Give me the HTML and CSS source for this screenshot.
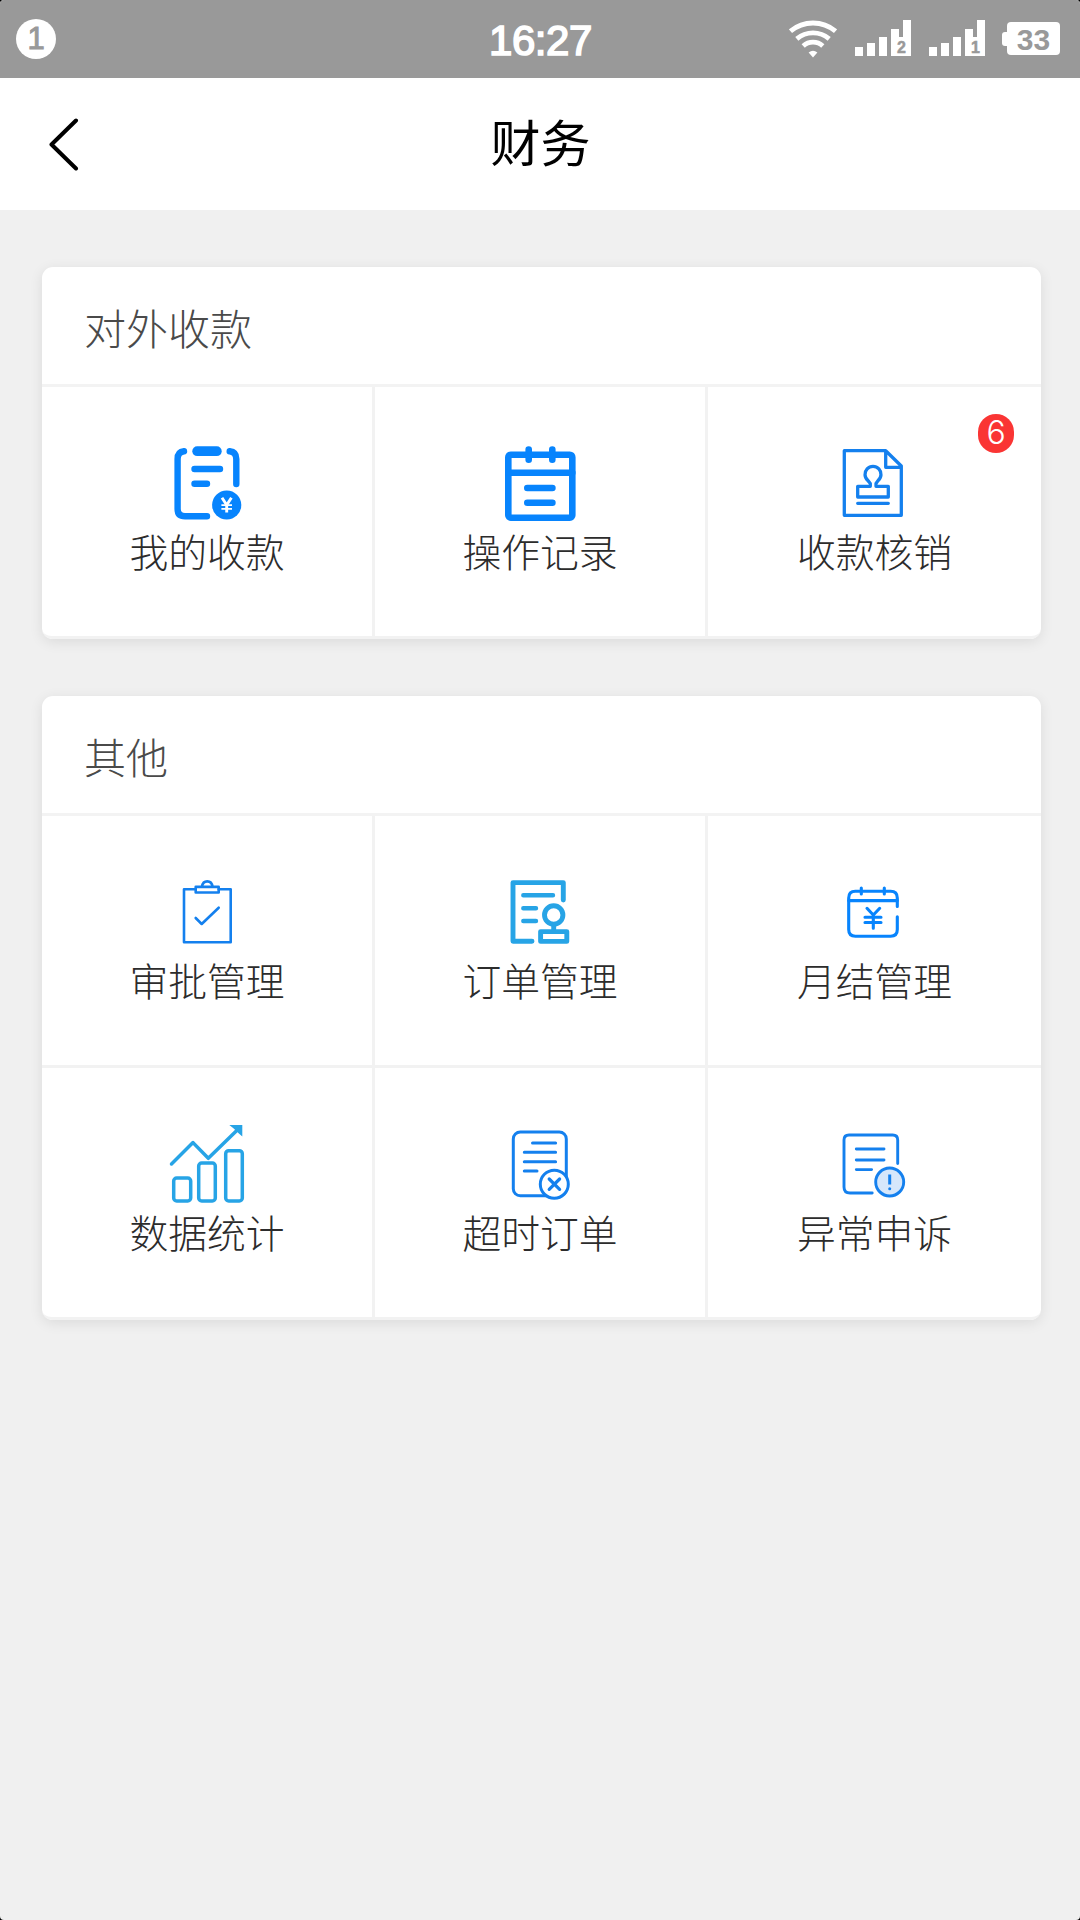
FILE: index.html
```html
<!DOCTYPE html>
<html lang="zh-CN">
<head>
<meta charset="utf-8">
<title>财务</title>
<link rel="stylesheet" href="styles.css">
</head>
<body>
<div class="screen">
  <div class="status">
    <div class="status-left"><span class="notice">1</span></div>
    <div class="clock">16:27</div>
    <div class="status-right">
      <svg class="wifi" viewBox="0 0 48 38" fill="none" stroke="#fff" stroke-width="4.8">
        <path d="M1.5 11.2A35 35 0 0 1 46.5 11.2"/>
        <path d="M7.8 18.8A25 25 0 0 1 40.2 18.8"/>
        <path d="M14.2 26A14.5 14.5 0 0 1 33.8 26"/>
        <path d="M24 37.5L19.6 32.5Q24 29 28.4 32.5Z" fill="#fff" stroke="none"/>
      </svg>
      <svg class="signal" viewBox="0 0 56 36" fill="#fff">
        <path d="M0 27h8v9H0zM12 23h8v13h-8zM24 17h8v19h-8zM36 9h8v8h4V0h8v36H36z"/>
        <text x="46.5" y="33" class="sim">2</text>
      </svg>
      <svg class="signal signal-b" viewBox="0 0 56 36" fill="#fff">
        <path d="M0 27h8v9H0zM12 23h8v13h-8zM24 17h8v19h-8zM36 9h8v8h4V0h8v36H36z"/>
        <text x="46.5" y="33" class="sim">1</text>
      </svg>
      <div class="battery"><span class="nub"></span><span class="level">33</span></div>
    </div>
  </div>

  <header class="nav">
    <svg class="back" viewBox="0 0 32 54" fill="none" stroke="#000" stroke-width="4" stroke-linecap="round" stroke-linejoin="round"><path d="M28 3.5L3.5 27.5L28 51.5"/></svg>
    <h1 class="title">财务</h1>
  </header>

  <main class="content">
    <section class="card">
      <h2 class="card-title">对外收款</h2>
      <div class="grid">
        <div class="cell">
          <svg class="icon azure" viewBox="0 0 90 90">
            <g stroke-width="6.4">
              <path d="M22 14.3Q15.6 15 15.6 22V72Q15.6 79.3 23 79.3H45"/>
              <path d="M67.7 14.3Q74.3 15 74.3 22V47"/>
              <path d="M32.5 32H58M32.5 46.7H45"/>
            </g>
            <path d="M35.2 14.2H54.8" stroke-width="9.8"/>
            <circle cx="64.7" cy="68" r="14.6" class="solid"/>
            <g stroke="#fff" stroke-linecap="butt"><path d="M60 60.8L64.7 68L69.4 60.8M64.7 67V75.5" stroke-width="2.9"/><path d="M59.4 68.2H70M59.4 71.8H70" stroke-width="1.7"/></g>
          </svg>
          <span class="label">我的收款</span>
        </div>
        <div class="cell">
          <svg class="icon azure" viewBox="0 0 90 90" stroke-width="6.6">
            <rect x="13.3" y="17.7" width="64" height="63" rx="2.5"/>
            <path d="M13.3 35.7H77.3M33.7 12.6V22.7M57.3 12.6V22.7M32.3 51H57.4M32.3 65.7H57.4"/>
          </svg>
          <span class="label">操作记录</span>
        </div>
        <div class="cell">
          <svg class="icon blue" viewBox="0 0 90 90" stroke-width="3.3">
            <path d="M15.3 13.7H56.7L72.3 29V78.3H15.3ZM56.7 13.7V30.3H72.3"/>
            <path d="M41.3 49.3H28.7V60H59.3V49.3H47V46.5L49 43.6A8 8 0 1 0 39 43.6L41.3 46.5ZM28.7 66.3H59.3"/>
          </svg>
          <span class="label">收款核销</span>
          <span class="badge">6</span>
        </div>
      </div>
    </section>

    <section class="card">
      <h2 class="card-title">其他</h2>
      <div class="grid">
        <div class="cell">
          <svg class="icon blue" viewBox="0 0 90 90" stroke-width="2.6">
            <path d="M33.7 23.3H22V76.3H68.7V23.3H56.7"/>
            <rect x="33.7" y="20.9" width="23" height="5.6"/>
            <path d="M40 20.7C41 13.6 49.5 13.6 50.5 20.7M33.7 52L39.7 58L56.7 41.7"/>
          </svg>
          <span class="label">审批管理</span>
        </div>
        <div class="cell">
          <svg class="icon sky" viewBox="0 0 90 90" stroke-width="4.9">
            <path d="M68.3 34V16.6H18V75.3H37"/>
            <path d="M28.3 29.3H58M28.3 42.3H41M28.3 55H41" stroke-width="4.4"/>
            <circle cx="58.7" cy="49" r="9.2"/>
            <path d="M58.7 59V65"/>
            <rect x="45.6" y="65.6" width="26.2" height="9.8"/>
          </svg>
          <span class="label">订单管理</span>
        </div>
        <div class="cell">
          <svg class="icon azure" viewBox="0 0 90 90" stroke-width="3.1">
            <path d="M68.3 40.5V32Q68.3 25.3 61.6 25.3H26.4Q19.7 25.3 19.7 32V63.6Q19.7 70.3 26.4 70.3H61.6Q68.3 70.3 68.3 63.6V50.8"/>
            <path d="M19.7 34.6H68.3M32.3 22V28M55.3 22V28"/>
            <path d="M38 42.3L44.3 49L50.7 42.3M44.3 49V62.3M36 51.3H52M36 56.5H52"/>
          </svg>
          <span class="label">月结管理</span>
        </div>
        <div class="cell">
          <svg class="icon sky" viewBox="0 0 90 90" stroke-width="3.5">
            <path d="M9.5 46L31 24.6L46.3 40.3L75.3 12" />
            <path d="M67.3 7H80.3V18.6L76 14.8L72 10.8Z" class="solid"/>
            <rect x="11.7" y="60" width="17" height="23" rx="3"/>
            <rect x="36.7" y="45" width="16.6" height="38" rx="3"/>
            <rect x="63.7" y="32.7" width="16.6" height="50.3" rx="3"/>
          </svg>
          <span class="label">数据统计</span>
        </div>
        <div class="cell">
          <svg class="icon blue" viewBox="0 0 90 90" stroke-width="3">
            <rect x="18.3" y="14" width="53" height="63.8" rx="7"/>
            <path d="M37.5 25H60.6M29.3 34.3H60.6M29.3 43.7H60.6M29.3 53H42" />
            <circle cx="59.3" cy="66.2" r="14" fill="#fff"/>
            <path d="M54.2 61L64.6 71.4M64.6 61L54.2 71.4" stroke-width="3.2"/>
          </svg>
          <span class="label">超时订单</span>
        </div>
        <div class="cell">
          <svg class="icon blue" viewBox="0 0 90 90" stroke-width="2.9">
            <path d="M68.7 45.5V22Q68.7 17 63.7 17H20Q15 17 15 22V69Q15 75 21 75H43.2"/>
            <path d="M27.3 31H55M27.3 42H55M27.3 51.6H42.6"/>
            <circle cx="60.7" cy="64" r="14" fill="#d6e7fb"/>
            <path d="M60.7 56.5V66.5" stroke-width="3" stroke-linecap="butt"/>
            <circle cx="60.7" cy="70.8" r="1.5" class="solid"/>
          </svg>
          <span class="label">异常申诉</span>
        </div>
      </div>
    </section>
  </main>
</div>
</body>
</html>
```
FILE: styles.css
```css
* { box-sizing: border-box; }
html { background: #000; }
body {
  margin: 0;
  font-family: "Noto Sans CJK SC", sans-serif;
}
.screen {
  width: 1080px;
  height: 1920px;
  background: #f0f0f0;
  border-radius: 4px;
  overflow: hidden;
}

/* system status bar */
.status {
  height: 78px;
  padding: 0 20px 0 16px;
  background: #999;
  color: #fff;
  display: grid;
  grid-template-columns: 1fr auto 1fr;
  font-family: "Liberation Sans", sans-serif;
  font-weight: 700;
}
.status-left { padding-top: 19px; }
.notice {
  display: block;
  width: 40px;
  height: 40px;
  border-radius: 50%;
  background: #fff;
  color: #999;
  font-size: 31px;
  font-weight: 400;
  -webkit-text-stroke: 1px #999;
  line-height: 40px;
  text-align: center;
}
.clock {
  padding-left: 5px;
  font-size: 42px;
  font-weight: 400;
  -webkit-text-stroke: 1.6px #fff;
  line-height: 81px;
  letter-spacing: -0.4px;
}
.status-right {
  display: flex;
  justify-content: flex-end;
  padding-top: 20px;
}
.wifi { width: 48px; height: 38px; margin-right: 18px; }
.signal { width: 56px; height: 36px; margin-right: 18px; }
.signal-b { margin-right: 17px; }
.sim {
  font-size: 16px;
  fill: #999;
  stroke: #999;
  stroke-width: 0.5px;
  text-anchor: middle;
}
.battery {
  display: flex;
  align-items: center;
  height: 33px;
  margin-top: 2px;
}
.nub {
  width: 5px;
  height: 14px;
  background: #fff;
  border-radius: 3px 0 0 3px;
}
.level {
  width: 53px;
  height: 33px;
  border-radius: 4px;
  background: #fff;
  color: #999;
  font-size: 30px;
  line-height: 35px;
  text-align: center;
}

/* title bar */
.nav {
  height: 132px;
  padding: 0 47px 0 48px;
  background: #fff;
  display: grid;
  grid-template-columns: 1fr auto 1fr;
  align-items: center;
}
.back { width: 32px; height: 54px; margin-bottom: 1px; }
.title {
  margin: 0 0 9px;
  font-size: 50px;
  font-weight: 400;
  line-height: 72px;
  color: #000;
}

/* cards */
.content {
  padding: 57px 39px 0 42px;
  display: flex;
  flex-direction: column;
  gap: 57px;
}
.card {
  background: #fff;
  border-radius: 11px;
  box-shadow: 0 3px 14px rgba(0, 0, 0, 0.09);
}
.card-title {
  margin: 0;
  height: 120px;
  padding-left: 42px;
  border-bottom: 3px solid #f3f3f3;
  font-size: 42px;
  font-weight: 300;
  line-height: 119px;
  color: #4a4a4a;
}
.grid {
  display: grid;
  grid-template-columns: 333px 333px 333px;
}
.cell {
  position: relative;
  height: 252px;
  padding-top: 50px;
  border-right: 3px solid #f2f2f2;
  border-bottom: 3px solid #f2f2f2;
  display: flex;
  flex-direction: column;
  align-items: center;
}
.cell:nth-child(3n) { border-right: 0; }
.cell:nth-child(3n) .icon { margin-right: 1px; }
.cell:nth-last-child(3) { border-bottom-left-radius: 10px; }
.cell:last-child { border-bottom-right-radius: 10px; }
.icon {
  width: 90px;
  height: 90px;
  fill: none;
  stroke: currentColor;
  stroke-linecap: round;
  stroke-linejoin: round;
}
.solid { fill: currentColor; stroke: none; }
.azure { color: #0784fd; }
.blue { color: #1480ee; }
.sky { color: #27a4e6; }
.label {
  font-size: 38.8px;
  font-weight: 300;
  line-height: 46px;
  color: #2c2c2c;
}
.badge {
  position: absolute;
  top: 27px;
  right: 27px;
  width: 36px;
  height: 39px;
  border-radius: 18px;
  background: #fa3534;
  color: #fff;
  font-family: Inter, sans-serif;
  font-size: 32px;
  font-weight: 300;
  line-height: 38px;
  text-align: center;
}
```
